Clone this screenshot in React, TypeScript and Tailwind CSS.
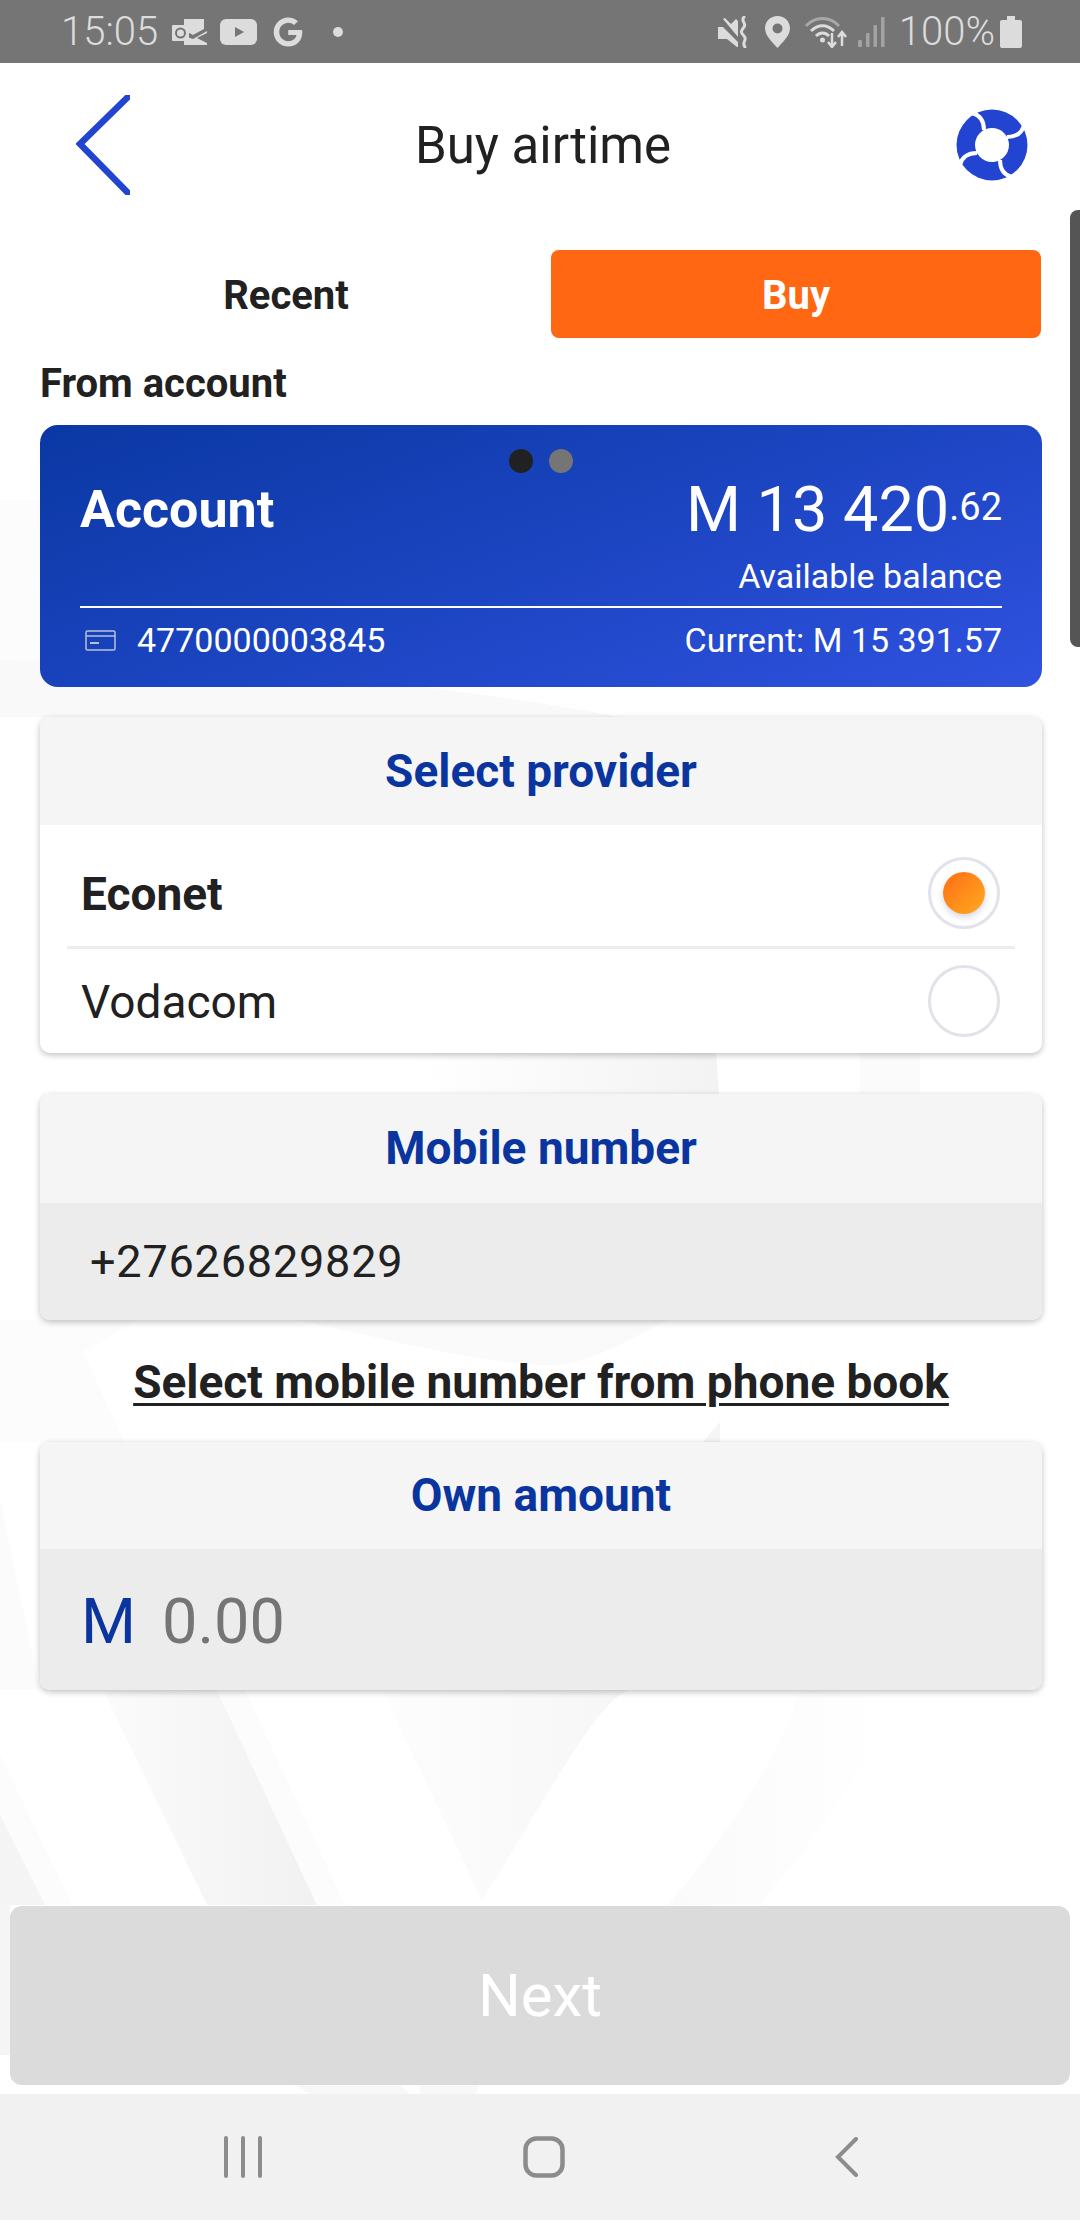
import { FaGoogle } from "react-icons/fa";

const ink = "text-[#212121]";

function Outlook() {
  return (
    <svg width="35" height="26" viewBox="0 0 35 26">
      <path d="M12 0h20v10l-11 6-9-5z" fill="#dcdcdc" />
      <path d="M12 17l9 3 14-8v2l-10 5 10 5v2H12z" fill="#dcdcdc" />
      <rect x="0" y="6" width="17" height="16" rx="1" fill="#dcdcdc" />
      <circle cx="8.5" cy="14" r="4.5" fill="none" stroke="#757575" strokeWidth="2" />
    </svg>
  );
}

function Youtube() {
  return (
    <svg width="37" height="26" viewBox="0 0 37 26">
      <rect width="37" height="26" rx="6" fill="#dcdcdc" />
      <path d="M15 8l9 5-9 5z" fill="#757575" />
    </svg>
  );
}

function Mute() {
  return (
    <svg width="32" height="32" viewBox="0 0 32 32" fill="none">
      <path d="M0 11h5l15 15v5l-1 0-10-8H0z" fill="#dcdcdc" />
      <path d="M5 3l15 18V5l-2-2-5 5-6-6z" fill="#dcdcdc" />
      <path d="M26 1c-4 4 3 6 0 10s-4 5 0 9-3 6 1 11" stroke="#dcdcdc" strokeWidth="3" strokeLinecap="round" />
    </svg>
  );
}

function Pin() {
  return (
    <svg width="25" height="32" viewBox="0 0 25 32">
      <path
        fillRule="evenodd"
        d="M12.5 0C5.6 0 0 5.4 0 12.3 0 20 8 27 12.5 32 17 27 25 20 25 12.3 25 5.4 19.4 0 12.5 0zm0 7.500a5 5 0 1 1 0 10 5 5 0 0 1 0-10z"
        fill="#dcdcdc"
      />
    </svg>
  );
}

function Wifi() {
  return (
    <svg width="42" height="32" viewBox="0 0 42 32" fill="none">
      <path d="M1 10C10 0 25 0 34 10" stroke="#a8a8a8" strokeWidth="3" />
      <path d="M6 15c7-7 16-7 23 0" stroke="#dcdcdc" strokeWidth="3" />
      <path d="M11 20c4-4 9-4 13 0" stroke="#dcdcdc" strokeWidth="3" />
      <circle cx="17.500" cy="24" r="2.500" fill="#dcdcdc" />
      <path d="M27 17v13M23 26l4 5 4-5" stroke="#dcdcdc" strokeWidth="2.500" />
      <path d="M37 30V17M33 21l4-5 4 5" stroke="#dcdcdc" strokeWidth="2.500" />
    </svg>
  );
}

function Signal() {
  return (
    <svg width="27" height="30" viewBox="0 0 27 30">
      <rect x="0" y="23" width="4" height="7" rx="1" fill="#a3a3a3" />
      <rect x="8" y="16" width="3.500" height="14" rx="1" fill="#a3a3a3" />
      <rect x="15.500" y="8" width="3.500" height="22" rx="1" fill="#a3a3a3" />
      <rect x="23" y="0" width="3.500" height="30" rx="1" fill="#a3a3a3" />
    </svg>
  );
}

function Battery() {
  return (
    <svg width="22" height="32" viewBox="0 0 22 32">
      <path d="M7 0h8v4h5a2 2 0 0 1 2 2v24a2 2 0 0 1-2 2H2a2 2 0 0 1-2-2V6a2 2 0 0 1 2-2h5z" fill="#dcdcdc" />
    </svg>
  );
}

function StatusBar() {
  return (
    <div className="flex h-[63px] shrink-0 items-center bg-[#757575] pl-[61px] pr-[58px] text-[40px] leading-none text-[#dcdcdc]">
      <span className="font-light">15:05</span>
      <span className="ml-[14px]"><Outlook /></span>
      <span className="ml-[13px]"><Youtube /></span>
      <FaGoogle className="ml-[16px]" size={30} color="#dcdcdc" />
      <span className="ml-[30px] h-[10px] w-[10px] rounded-full bg-[#dcdcdc]" />
      <div className="ml-auto flex items-center">
        <Mute />
        <span className="ml-[15px]"><Pin /></span>
        <span className="ml-[15px]"><Wifi /></span>
        <span className="ml-[11px]"><Signal /></span>
        <span className="ml-[14px] font-light">100%</span>
        <span className="ml-[5px]"><Battery /></span>
      </div>
    </div>
  );
}

function BackChevron() {
  return (
    <svg width="54" height="100" viewBox="0 0 54 100" fill="none">
      <path d="M56 -2L4 49l52 53" stroke="#2344d0" strokeWidth="6.500" />
    </svg>
  );
}

function HelpRing() {
  const gap = "M-20 -32C-12 -30 -8 -24 -8 -15";
  return (
    <svg width="72" height="72" viewBox="-36 -36 72 72">
      <circle r="35.500" fill="#2344d0" />
      <circle r="17" fill="#fff" />
      <g fill="none" stroke="#fff" strokeWidth="4">
        <path d={gap} />
        <path d={gap} transform="rotate(90)" />
        <path d={gap} transform="rotate(180)" />
        <path d={gap} transform="rotate(270)" />
      </g>
    </svg>
  );
}

function Header() {
  return (
    <div className="relative flex h-[164px] shrink-0 items-center justify-between pl-[76px] pr-[52px]">
      <BackChevron />
      <span className={`text-[51px] leading-none ${ink}`}>Buy airtime</span>
      <HelpRing />
    </div>
  );
}

function Tabs() {
  return (
    <div className="mt-[23px] flex h-[88px] gap-[19px]">
      <div className={`flex w-[492px] items-center justify-center pt-[4px] text-[40px] font-bold ${ink}`}>Recent</div>
      <div className="flex w-[490px] items-center justify-center rounded-[8px] bg-[#ff6712] pt-[4px] text-[40px] font-bold text-white">
        Buy
      </div>
    </div>
  );
}

function CardGlyph() {
  return (
    <svg width="31" height="21" viewBox="0 0 31 21" fill="none" stroke="#b9c0d6" strokeWidth="1.500">
      <rect x="1" y="1" width="29" height="19" rx="1.500" />
      <path d="M1 6h29" />
      <path d="M5 13h9" strokeWidth="2" />
    </svg>
  );
}

function AccountCard() {
  return (
    <div className="h-[262px] rounded-[18px] bg-[linear-gradient(160deg,#0a38a3_0%,#1f47c7_60%,#3052e0_100%)] px-[40px] pt-[24px] text-white">
      <div className="flex justify-center gap-[16px]">
        <span className="h-[24px] w-[24px] rounded-full bg-[#212121]" />
        <span className="h-[24px] w-[24px] rounded-full bg-[#757575]" />
      </div>
      <div className="mt-[7px] flex h-[60px] items-center justify-between">
        <span className="text-[52px] font-bold leading-none">Account</span>
        <span className="flex items-start text-[63px] leading-[60px]">
          M 13 420<span className="mt-[5px] text-[38px] leading-[44px]">.62</span>
        </span>
      </div>
      <div className="mt-[16px] text-right text-[34px] leading-[40px]">Available balance</div>
      <div className="mt-[10px] h-[2px] bg-white" />
      <div className="mt-[12px] flex items-center justify-between text-[34px] leading-[40px]">
        <span className="flex items-center gap-[21px] pl-[5px]">
          <CardGlyph />
          4770000003845
        </span>
        <span>Current: M 15 391.57</span>
      </div>
    </div>
  );
}

function Radio({ checked }: { checked?: boolean }) {
  return (
    <span className="flex h-[72px] w-[72px] items-center justify-center rounded-full border-[3px] border-[#e2e2ea] bg-white">
      {checked && (
        <span className="h-[42px] w-[42px] rounded-full bg-[linear-gradient(135deg,#ff6d14,#ffab20)] shadow-[0_3px_6px_rgba(80,90,160,0.25)]" />
      )}
    </span>
  );
}

function CardTitle({ children, height }: { children: string; height: string }) {
  return (
    <div className={`flex items-center justify-center bg-[#f5f5f5] text-[46px] font-bold text-[#0a359f] ${height}`}>
      {children}
    </div>
  );
}

function ProviderCard() {
  return (
    <div className="mt-[30px] overflow-hidden rounded-[10px] bg-white shadow-[0_2px_6px_rgba(0,0,0,0.25)]">
      <CardTitle height="h-[108px]">Select provider</CardTitle>
      <div className={`flex h-[121px] items-center justify-between pl-[41px] pr-[42px] pt-[14px] text-[46px] font-bold ${ink}`}>
        <span className="pt-[3px]">Econet</span>
        <Radio checked />
      </div>
      <div className="mx-[27px] h-[3px] bg-[#ededf0]" />
      <div className={`flex h-[104px] items-center justify-between pl-[41px] pr-[42px] text-[46px] ${ink}`}>
        <span className="pt-[3px]">Vodacom</span>
        <Radio />
      </div>
    </div>
  );
}

function MobileCard() {
  return (
    <div className="mt-[41px] overflow-hidden rounded-[10px] shadow-[0_2px_6px_rgba(0,0,0,0.25)]">
      <CardTitle height="h-[109px]">Mobile number</CardTitle>
      <div className={`flex h-[117px] items-center bg-[#ececec] pl-[50px] text-[45px] tracking-[0.8px] ${ink}`}>
        +27626829829
      </div>
    </div>
  );
}

function AmountCard() {
  return (
    <div className="overflow-hidden rounded-[10px] shadow-[0_2px_6px_rgba(0,0,0,0.25)]">
      <CardTitle height="h-[107px]">Own amount</CardTitle>
      <div className="flex h-[141px] items-center gap-[26px] bg-[#ececec] pl-[41px] pt-[6px] text-[63px]">
        <span className="text-[#0a359f]">M</span>
        <span className="text-[#757575]">0.00</span>
      </div>
    </div>
  );
}

function NavBar() {
  return (
    <div className="flex h-[126px] shrink-0 items-center bg-[#f1f1f1] pl-[224px]">
      <svg width="38" height="42" viewBox="0 0 38 42" fill="none" stroke="#8c8c8c" strokeWidth="4" strokeLinecap="round">
        <path d="M2 2v38M19 2v38M36 2v38" />
      </svg>
      <svg className="ml-[261px]" width="42" height="42" viewBox="0 0 42 42" fill="none" stroke="#8c8c8c" strokeWidth="4.500">
        <rect x="2.500" y="2.500" width="37" height="37" rx="11" />
      </svg>
      <svg className="ml-[270px]" width="24" height="40" viewBox="0 0 24 40" fill="none" stroke="#8c8c8c" strokeWidth="4" strokeLinecap="round">
        <path d="M21 2L3 20l18 18" />
      </svg>
    </div>
  );
}

// faint logo watermark behind the form
function Watermark() {
  return (
    <svg className="absolute left-0 top-0" width="1080" height="2220" viewBox="0 0 1080 2220">
      <defs>
        <linearGradient id="band" x1="0" y1="0" x2="1" y2="0">
          <stop offset="0" stopColor="#fbfbfb" />
          <stop offset="1" stopColor="#f1f1f1" />
        </linearGradient>
        <linearGradient id="vee" x1="0" y1="0" x2="1" y2="0">
          <stop offset="0" stopColor="#fdfdfd" />
          <stop offset="1" stopColor="#f6f6f6" />
        </linearGradient>
        <linearGradient id="side" x1="0" y1="0" x2="1" y2="0">
          <stop offset="0" stopColor="#fafafa" />
          <stop offset="1" stopColor="#ffffff" />
        </linearGradient>
        <linearGradient id="top" x1="0" y1="0" x2="1" y2="0">
          <stop offset="0" stopColor="#ffffff" />
          <stop offset="1" stopColor="#f3f3f3" />
        </linearGradient>
      </defs>
      <path d="M0 500h40v190H0z" fill="#fcfcfc" />
      <path d="M0 660c200 0 420 20 620 57H0z" fill="#f9f9f9" />
      <path d="M420 1053h296l3 41H440z" fill="url(#top)" />
      <path d="M860 1053h60v41h-60z" fill="#fbfbfb" />
      <path d="M296 1320h372c-40 20-80 45-117 45-70 0-180-30-255-45z" fill="#fafafa" />
      <path d="M0 1320h138l-55 32 41 90H0z" fill="#fcfcfc" />
      <path d="M703 1442l17-20v20z" fill="#f5f5f5" />
      <path d="M0 1500l40 190H0z" fill="#fbfbfb" />
      <path d="M103 1690l104 215h110L217 1690z" fill="url(#band)" />
      <path d="M217 1690l100 215h28L245 1690z" fill="#fcfcfc" />
      <path d="M0 1755l72 150H0z" fill="#fcfcfc" />
      <path d="M0 1815l45 90H0z" fill="#f4f4f4" />
      <path d="M382 1690l100 210c70-110 130-230 162-210z" fill="url(#vee)" />
      <path d="M668 1905c60-70 110-145 132-215h90c-20 90-80 150-130 215z" fill="url(#side)" />
      <path d="M0 1905h10v150H0z" fill="#f5f5f5" />
      <path d="M295 2085h105l10 9H310zM420 2085h60l-5 9h-55z" fill="#f8f8f8" />
    </svg>
  );
}

export default function App() {
  return (
    <div className="relative flex h-[2220px] w-[1080px] flex-col overflow-hidden bg-white font-[Roboto,sans-serif]">
      <Watermark />
      <div className="relative flex flex-1 flex-col">
        <StatusBar />
        <Header />
        <div className="flex flex-1 flex-col pl-[40px] pr-[38px]">
          <Tabs />
          <div className={`mt-[28px] mb-[23px] text-[40px] font-bold leading-[36px] ${ink}`}>From account</div>
          <AccountCard />
          <ProviderCard />
          <MobileCard />
          <div className={`flex h-[122px] items-center justify-center pt-[2px] text-[46px] font-bold underline decoration-[3px] underline-offset-[5px] ${ink}`}>
            Select mobile number from phone book
          </div>
          <AmountCard />
        </div>
        <div className="mx-[10px] mb-[9px] flex h-[179px] items-center justify-center rounded-[12px] bg-[#dbdbdb] text-[60px] text-white">
          Next
        </div>
        <NavBar />
      </div>
      {/* scroll indicator overlaps the page edge */}
      <div className="absolute right-0 top-[210px] h-[437px] w-[10px] rounded-l-[8px] bg-[#555555]" />
    </div>
  );
}
